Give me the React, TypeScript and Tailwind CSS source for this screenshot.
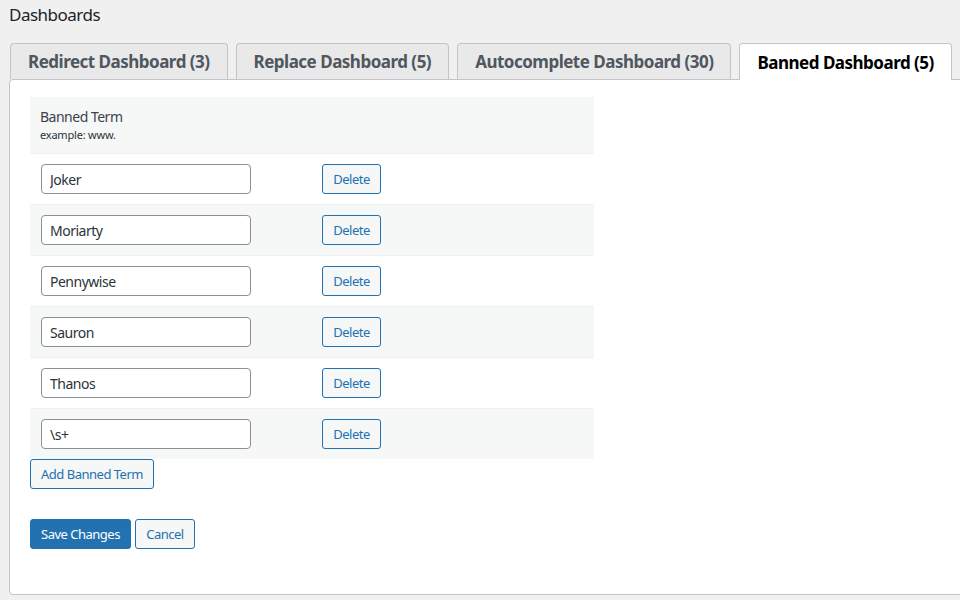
const tabs = [
  { label: "Redirect Dashboard (3)", active: false },
  { label: "Replace Dashboard (5)", active: false },
  { label: "Autocomplete Dashboard (30)", active: false },
  { label: "Banned Dashboard (5)", active: true },
];

const terms = ["Joker", "Moriarty", "Pennywise", "Sauron", "Thanos", "\\s+"];

export default function App() {
  return (
    <div className="h-[600px] overflow-hidden bg-[#f0f0f1] font-['Noto_Sans',sans-serif] tracking-[-0.5px] text-[#3c434a]">
      <h1 className="pl-[9px] pt-[3px] text-[17px] leading-[24px] text-[#1d2327]">Dashboards</h1>

      <div className="mt-[16px] flex gap-2 pl-[10px]">
        {tabs.map((t) => (
          <div
            key={t.label}
            className={
              t.active
                ? "relative z-10 -mb-px flex h-[37px] items-center whitespace-nowrap rounded-t-[4px] border border-b-0 border-[#c3c4c7] bg-white px-[17px] pt-px text-[17px] font-bold text-black"
                : "flex h-[36px] items-center whitespace-nowrap rounded-t-[4px] border border-b-0 border-[#c3c4c7] bg-[#e9e9ea] px-[17px] pt-px text-[17px] font-bold text-[#50575e]"
            }
          >
            {t.label}
          </div>
        ))}
      </div>

      <div className="ml-[9px] mr-[-20px] h-[516px] rounded-[4px] border border-[#c3c4c7] bg-white pl-[20px] pt-[17px]">
        <div className="w-[564px]">
          <div className="border-b border-[#f0f0f1] bg-[#f6f7f7] px-[10px] py-[10px]">
            <div className="text-[14px] leading-[20px] text-[#3c434a]">Banned Term</div>
            <div className="text-[11px] leading-[16px] tracking-[-0.2px] text-[#2c3338]">example: www.</div>
          </div>
          {terms.map((term, i) => (
            <div
              key={term}
              className={
                (i % 2 === 1 ? "bg-[#f6f7f7] " : "bg-white ") +
                (i < terms.length - 1 ? "border-b border-[#f0f0f1] " : "") +
                "flex items-center py-[10px] pl-[11px]"
              }
            >
              <input
                defaultValue={term}
                className="h-[30px] w-[210px] rounded-[4px] border border-[#8c8f94] bg-white pl-[8px] text-[14px] text-[#2c3338] outline-none"
              />
              <button className="ml-[71px] h-[30px] w-[59px] rounded-[3px] border border-[#2271b1] bg-[#f6f7f7] pt-px text-[13px] text-[#2271b1]">
                Delete
              </button>
            </div>
          ))}
        </div>

        <button className="h-[30px] w-[124px] rounded-[3px] border border-[#2271b1] bg-[#f6f7f7] pt-px text-[13px] text-[#2271b1]">
          Add Banned Term
        </button>

        <div className="mt-[30px] flex gap-[4px]">
          <button className="h-[30px] w-[101px] rounded-[3px] border border-[#2271b1] bg-[#2271b1] pt-px text-[13px] text-white">
            Save Changes
          </button>
          <button className="h-[30px] w-[60px] rounded-[3px] border border-[#2271b1] bg-[#f6f7f7] pt-px text-[13px] text-[#2271b1]">
            Cancel
          </button>
        </div>
      </div>
    </div>
  );
}
